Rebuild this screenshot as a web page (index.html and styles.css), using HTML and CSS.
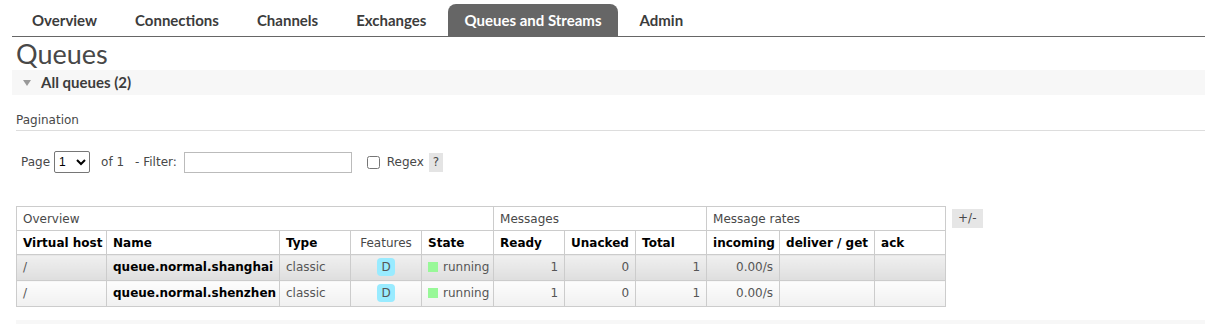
FILE: index.html
```html
<!DOCTYPE html>
<html lang="en">
<head>
    <meta charset="UTF-8">
    <title>RabbitMQ Management - Queues</title>
    <link rel="stylesheet" href="styles.css">
</head>
<body>
    <ul class="menu">
        <li>Overview</li>
        <li>Connections</li>
        <li>Channels</li>
        <li>Exchanges</li>
        <li class="selected">Queues and Streams</li>
        <li>Admin</li>
    </ul>

    <h1>Queues</h1>
    <h2 class="section"><span class="arrow"></span>All queues (2)</h2>

    <h3 class="pagination-title">Pagination</h3>
    <div class="pagination">
        <label>Page</label>
        <select class="page-select"><option>1</option></select>
        <span class="of">of 1</span>
        <label>- Filter:</label>
        <input type="text" class="filter">
        <input type="checkbox" class="regex-box">
        <label>Regex</label>
        <span class="help">?</span>
    </div>

    <div class="list-wrap">
        <table class="list">
            <colgroup>
                <col class="c-vhost"><col class="c-name"><col class="c-type"><col class="c-feat"><col class="c-state">
                <col class="c-num"><col class="c-num"><col class="c-num">
                <col class="c-in"><col class="c-deliver"><col class="c-ack">
            </colgroup>
            <tr class="group">
                <th colspan="5">Overview</th>
                <th colspan="3">Messages</th>
                <th colspan="3">Message rates</th>
            </tr>
            <tr class="head">
                <th>Virtual host</th>
                <th>Name</th>
                <th>Type</th>
                <th class="plain">Features</th>
                <th>State</th>
                <th>Ready</th>
                <th>Unacked</th>
                <th>Total</th>
                <th>incoming</th>
                <th>deliver / get</th>
                <th>ack</th>
            </tr>
            <tr class="alt1">
                <td>/</td>
                <td class="name">queue.normal.shanghai</td>
                <td>classic</td>
                <td class="c"><span class="badge">D</span></td>
                <td><span class="dot"></span>running</td>
                <td class="r">1</td>
                <td class="r">0</td>
                <td class="r">1</td>
                <td class="r">0.00/s</td>
                <td></td>
                <td></td>
            </tr>
            <tr class="alt2">
                <td>/</td>
                <td class="name">queue.normal.shenzhen</td>
                <td>classic</td>
                <td class="c"><span class="badge">D</span></td>
                <td><span class="dot"></span>running</td>
                <td class="r">1</td>
                <td class="r">0</td>
                <td class="r">1</td>
                <td class="r">0.00/s</td>
                <td></td>
                <td></td>
            </tr>
        </table>
        <span class="toggle">+/-</span>
    </div>

    <div class="next-section"></div>
</body>
</html>
```

FILE: styles.css
```css
body {
    margin: 0;
    font-family: "DejaVu Sans", Verdana, sans-serif;
    font-size: 12px;
    color: #484848;
    background: #fff;
}
.menu {
    display: flex;
    list-style: none;
    margin: 4px 0 0 12px;
    padding: 0 0 0 4px;
    border-bottom: 1px solid #666;
    font-family: Lato, "Open Sans", sans-serif;
    font-weight: bold;
    font-size: 15px;
}
.menu li {
    padding: 0 16px;
    margin-right: 6px;
    line-height: 32px;
    color: #3c3c3c;
    border-radius: 8px 8px 0 0;
}
.menu li.selected {
    background: #666;
    color: #fff;
}
h1 {
    margin: 0 0 0 16px;
    font-family: Lato, "Open Sans", sans-serif;
    font-weight: normal;
    font-size: 27px;
    line-height: 33px;
    color: #484848;
}
.section {
    margin: 0 0 0 12px;
    background: #f7f7f7;
    height: 25px;
    line-height: 25px;
    padding-left: 11px;
    font-family: Lato, "Open Sans", sans-serif;
    font-size: 15px;
    font-weight: bold;
    color: #3c3c3c;
    display: flex;
    align-items: center;
}
.arrow {
    width: 0;
    height: 0;
    border-left: 4px solid transparent;
    border-right: 4px solid transparent;
    border-top: 6px solid #999;
    margin-right: 10px;
}
.pagination-title {
    margin: 18px 0 0 16px;
    padding-bottom: 3px;
    font-size: 12px;
    font-weight: normal;
    line-height: 14px;
    border-bottom: 1px solid #ddd;
}
.pagination {
    display: flex;
    align-items: center;
    margin: 20px 0 0 16px;
    padding-left: 5px;
    height: 22px;
}
.page-select {
    margin-left: 4px;
    width: 36px;
    height: 22px;
    font-size: 12px;
    border: 1px solid #767676;
    border-radius: 2px;
    background: #fff;
    color: #000;
}
.of {
    margin: 0 11px 0 11px;
}
.filter {
    margin-left: 7px;
    width: 168px;
    height: 21px;
    box-sizing: border-box;
    border: 1px solid #bbb;
    padding: 0;
}
.regex-box {
    margin: 0 7px 0 15px;
    width: 13px;
    height: 13px;
}
.help {
    margin-left: 5px;
    background: #e4e4e4;
    padding: 2px 4px;
    line-height: 15px;
}
.list-wrap {
    display: flex;
    align-items: flex-start;
    margin: 33px 0 0 16px;
}
.list {
    border-collapse: collapse;
    table-layout: fixed;
    width: 930px;
}
.c-vhost { width: 90px; }
.c-name { width: 173px; }
.c-type { width: 71px; }
.c-feat { width: 71px; }
.c-state { width: 72px; }
.c-num { width: 71px; }
.c-in { width: 73px; }
.c-deliver { width: 95px; }
.c-ack { width: 71px; }
.list th, .list td {
    border: 1px solid #ccc;
    padding: 0 6px;
    text-align: left;
    white-space: nowrap;
}
.list tr.group th {
    height: 23px;
    font-weight: normal;
    color: #484848;
}
.list tr.head th {
    height: 23px;
    color: #000;
}
.list tr.head th.plain {
    font-weight: normal;
    color: #484848;
    text-align: center;
}
.list td {
    height: 26px;
    vertical-align: top;
    padding-top: 5px;
    padding-bottom: 0;
    box-sizing: border-box;
    color: #555;
}
.list tr.alt1 td {
    background: linear-gradient(#f0f0f0, #dedede);
}
.list tr.alt2 td {
    background: linear-gradient(#fdfdfd, #f0f0f0);
}
.list td.name {
    font-weight: bold;
    color: #000;
}
.list td.r {
    text-align: right;
}
.list td.c {
    text-align: center;
    padding-top: 3px;
}
.badge {
    display: inline-block;
    background: #99ebff;
    border-radius: 4px;
    width: 18px;
    height: 18px;
    line-height: 19px;
    text-align: center;
    color: #555;
}
.dot {
    display: inline-block;
    width: 10px;
    height: 10px;
    background: #98f898;
    margin-right: 5px;
    vertical-align: -1px;
}
.toggle {
    margin: 3px 0 0 6px;
    background: #e6e6e6;
    padding: 0 6px;
    line-height: 19px;
}
.next-section {
    margin: 13px 0 0 16px;
    height: 10px;
    background: #f7f7f7;
}
```
